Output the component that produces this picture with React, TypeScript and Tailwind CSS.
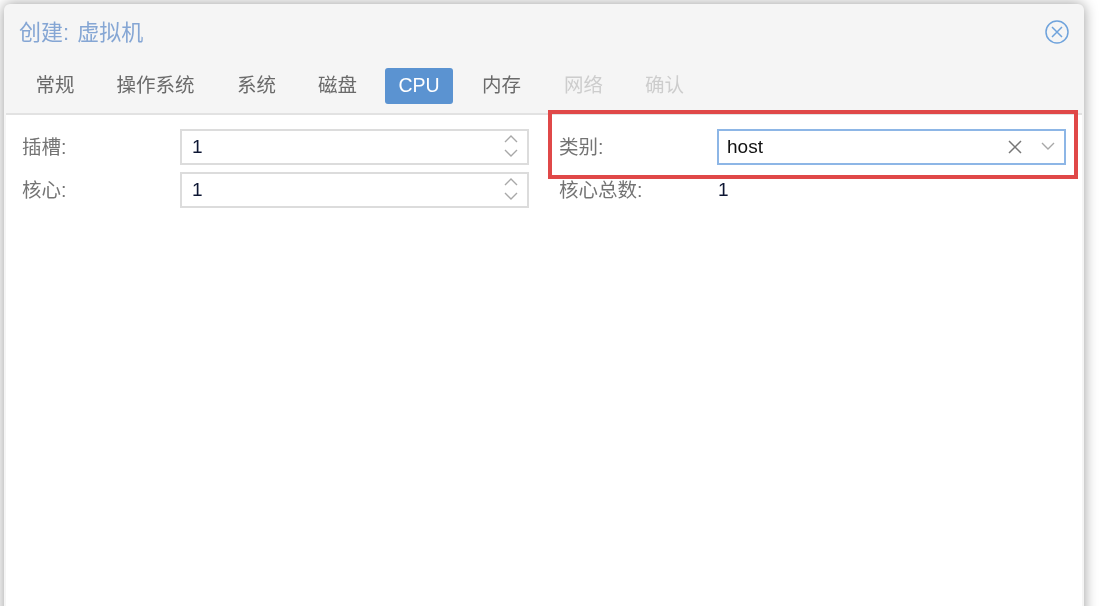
import React from "react";

const font = { fontFamily: '"Liberation Sans", "Noto Sans CJK SC", sans-serif' };

function Field({ label, children }: { label: string; children: React.ReactNode }) {
  return (
    <div className="flex items-center h-[36px]">
      <div className="w-[158px] shrink-0 pt-[2px] text-[19.5px] text-[#747474]">{label}</div>
      {children}
    </div>
  );
}

function Spinner() {
  return (
    <div className="flex items-center h-[36px] w-[349px] border-2 border-[#dcdcdc] bg-white pl-[10px] pr-[8px]">
      <span className="flex-1 pt-[1px] text-[19px] text-[#0d1633]">1</span>
      <svg className="-translate-y-[1px]" width="16" height="28" viewBox="0 0 16 28" fill="none" stroke="#a8a8a8" strokeWidth="1.4">
        <path d="M2 10 L8 4 L14 10" />
        <path d="M2 18 L8 24 L14 18" />
      </svg>
    </div>
  );
}

function Tab({ label, active, disabled, w }: { label: string; active?: boolean; disabled?: boolean; w: string }) {
  return (
    <div
      className={`h-[36px] flex items-center justify-center rounded-[3px] text-[19.5px] ${w} ${
        active ? "bg-[#5b93d1] text-white" : disabled ? "text-[#cdcdcd]" : "text-[#6a6a6a]"
      }`}
    >
      {label}
    </div>
  );
}

export default function App() {
  return (
    <div className="h-[606px] w-[1101px] overflow-hidden bg-white blur-[0.6px]" style={font}>
      <div className="pt-[4px] pl-[4px]">
        <div className="relative w-[1080px] h-[640px] rounded-t-[6px] bg-[#f5f5f5] px-[2px] shadow-[0_0_14px_rgba(0,0,0,0.4)]">
          <div className="flex items-center justify-between h-[56px] pl-[13px] pr-[13px]">
            <span className="text-[22px] text-[#85a6d4] [word-spacing:2px]">创建: 虚拟机</span>
            <svg width="24" height="24" viewBox="0 0 24 24" fill="none" stroke="#6fa3dc" strokeWidth="1.5">
              <circle cx="12" cy="12" r="11" />
              <path d="M7 7 L17 17 M17 7 L7 17" />
            </svg>
          </div>
          <div className="flex items-center h-[36px] mt-[8px] pl-[15px] gap-[14px]">
            <Tab label="常规" w="w-[66px] ml-[1px]" />
            <Tab label="操作系统" w="w-[107px]" />
            <Tab label="系统" w="w-[67px]" />
            <Tab label="磁盘" w="w-[67px]" />
            <Tab label="CPU" active w="w-[68px]" />
            <Tab label="内存" w="w-[67px] ml-[1px]" />
            <Tab label="网络" disabled w="w-[67px] ml-[1px]" />
            <Tab label="确认" disabled w="w-[67px]" />
          </div>
          <div className="mt-[9px] h-[600px] border-t-2 border-[#e2e2e2] bg-white pt-[14px] pl-[16px] flex gap-[30px]">
            <div className="flex flex-col gap-[7px]">
              <Field label="插槽:">
                <Spinner />
              </Field>
              <Field label="核心:">
                <Spinner />
              </Field>
            </div>
            <div className="flex flex-col gap-[7px]">
              <Field label="类别:">
                <div className="flex items-center h-[36px] w-[349px] border-2 border-[#8db6e6] bg-white pl-[8px] pr-[8px]">
                  <span className="flex-1 pt-[1px] text-[19px] text-[#111111]">host</span>
                  <svg width="14" height="14" viewBox="0 0 14 14" fill="none" stroke="#777777" strokeWidth="1.5">
                    <path d="M1 1 L13 13 M13 1 L1 13" />
                  </svg>
                  <svg className="ml-[18px] -translate-y-[1px]" width="16" height="10" viewBox="0 0 16 10" fill="none" stroke="#a8a8a8" strokeWidth="1.4">
                    <path d="M2 2 L8 8 L14 2" />
                  </svg>
                </div>
              </Field>
              <Field label="核心总数:">
                <span className="pl-[1px] pt-[1px] text-[19px] text-[#0d1633]">1</span>
              </Field>
            </div>
          </div>
          <div className="absolute left-[544px] top-[106px] w-[530px] h-[69px] border-[4px] border-[#e04848]" />
        </div>
      </div>
    </div>
  );
}
